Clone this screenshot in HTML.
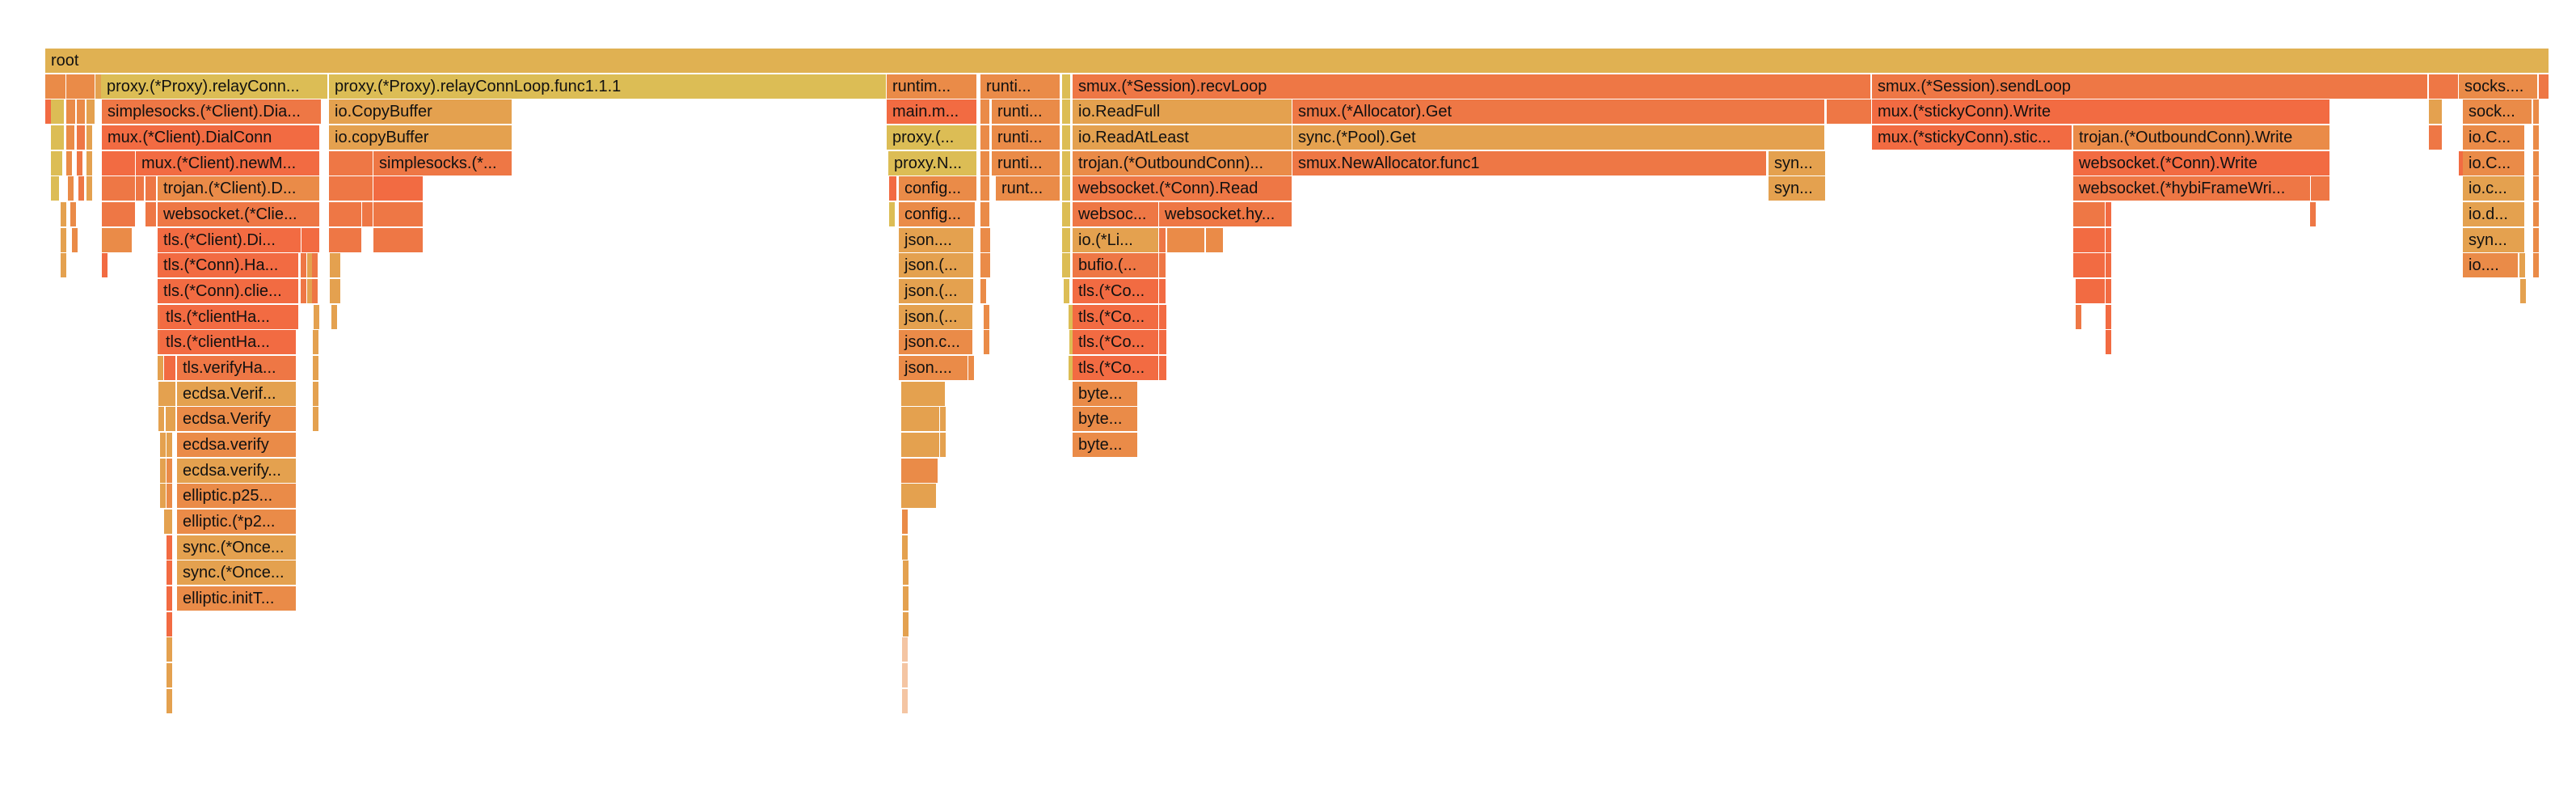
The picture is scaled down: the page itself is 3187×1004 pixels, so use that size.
<!DOCTYPE html>
<html><head><meta charset="utf-8"><style>
html,body{margin:0;padding:0;background:#fff;width:3187px;height:1004px;overflow:hidden;position:relative}
.r{position:absolute;left:0;height:30px;width:3187px}
.r div{position:absolute;top:0;height:30px;overflow:hidden;white-space:nowrap;font:20px/31px "Liberation Sans",sans-serif;color:#111;padding-left:7px;box-sizing:border-box}
.G{background:#e0b152}.Y{background:#dcbd55}.O{background:#e8994a}.A{background:#e4a14f}.R{background:#f26b42}.M{background:#ee7745}.P{background:#ea8b48}
</style></head><body>
<div class="r" style="top:60px"><div class="G" style="left:56px;width:3097px">root</div></div>
<div class="r" style="top:92px">
<div class="P" style="left:56px;width:25px"></div><div class="P" style="left:82px;width:35px"></div><div class="A" style="left:118px;width:4px"></div>
<div class="Y" style="left:125px;width:280px">proxy.(*Proxy).relayConn...</div>
<div class="Y" style="left:407px;width:689px">proxy.(*Proxy).relayConnLoop.func1.1.1</div>
<div class="P" style="left:1097px;width:111px">runtim...</div>
<div class="P" style="left:1213px;width:98px">runti...</div>
<div class="Y" style="left:1314px;width:10px"></div>
<div class="M" style="left:1327px;width:987px">smux.(*Session).recvLoop</div>
<div class="M" style="left:2316px;width:687px">smux.(*Session).sendLoop</div>
<div class="M" style="left:3005px;width:36px"></div>
<div class="P" style="left:3042px;width:97px">socks....</div>
<div class="M" style="left:3141px;width:12px"></div>
</div>
<div class="r" style="top:123px">
<div class="R" style="left:56px;width:5px"></div><div class="Y" style="left:63px;width:16px"></div><div class="P" style="left:82px;width:11px"></div><div class="P" style="left:95px;width:10px"></div><div class="A" style="left:107px;width:10px"></div>
<div class="M" style="left:126px;width:271px">simplesocks.(*Client).Dia...</div>
<div class="A" style="left:407px;width:226px">io.CopyBuffer</div>
<div class="R" style="left:1097px;width:111px">main.m...</div>
<div class="P" style="left:1213px;width:11px"></div>
<div class="P" style="left:1227px;width:84px">runti...</div>
<div class="Y" style="left:1314px;width:10px"></div>
<div class="A" style="left:1327px;width:271px">io.ReadFull</div>
<div class="M" style="left:1599px;width:658px">smux.(*Allocator).Get</div>
<div class="M" style="left:2260px;width:55px"></div>
<div class="R" style="left:2316px;width:566px">mux.(*stickyConn).Write</div>
<div class="A" style="left:3005px;width:16px"></div>
<div class="P" style="left:3047px;width:85px">sock...</div>
<div class="P" style="left:3134px;width:3px"></div>
</div>
<div class="r" style="top:155px">
<div class="Y" style="left:63px;width:16px"></div><div class="P" style="left:82px;width:10px"></div><div class="M" style="left:95px;width:10px"></div><div class="A" style="left:107px;width:6px"></div>
<div class="R" style="left:126px;width:269px">mux.(*Client).DialConn</div>
<div class="A" style="left:407px;width:226px">io.copyBuffer</div>
<div class="Y" style="left:1097px;width:111px">proxy.(...</div>
<div class="P" style="left:1213px;width:11px"></div>
<div class="P" style="left:1227px;width:84px">runti...</div>
<div class="Y" style="left:1314px;width:10px"></div>
<div class="A" style="left:1327px;width:271px">io.ReadAtLeast</div>
<div class="A" style="left:1599px;width:658px">sync.(*Pool).Get</div>
<div class="R" style="left:2316px;width:247px">mux.(*stickyConn).stic...</div>
<div class="P" style="left:2565px;width:317px">trojan.(*OutboundConn).Write</div>
<div class="M" style="left:3005px;width:16px"></div>
<div class="P" style="left:3047px;width:76px">io.C...</div>
<div class="P" style="left:3134px;width:3px"></div>
</div>
<div class="r" style="top:187px">
<div class="Y" style="left:63px;width:14px"></div><div class="P" style="left:82px;width:6px"></div><div class="M" style="left:95px;width:5px"></div><div class="A" style="left:107px;width:6px"></div>
<div class="R" style="left:126px;width:41px"></div>
<div class="R" style="left:168px;width:227px">mux.(*Client).newM...</div>
<div class="M" style="left:407px;width:54px"></div>
<div class="M" style="left:462px;width:171px">simplesocks.(*...</div>
<div class="Y" style="left:1099px;width:109px">proxy.N...</div>
<div class="P" style="left:1213px;width:11px"></div>
<div class="P" style="left:1227px;width:84px">runti...</div>
<div class="Y" style="left:1314px;width:10px"></div>
<div class="P" style="left:1327px;width:271px">trojan.(*OutboundConn)...</div>
<div class="M" style="left:1599px;width:586px">smux.NewAllocator.func1</div>
<div class="A" style="left:2188px;width:70px">syn...</div>
<div class="R" style="left:2565px;width:317px">websocket.(*Conn).Write</div>
<div class="R" style="left:3042px;width:3px"></div>
<div class="P" style="left:3047px;width:76px">io.C...</div>
<div class="P" style="left:3134px;width:3px"></div>
</div>
<div class="r" style="top:218px">
<div class="Y" style="left:63px;width:10px"></div><div class="P" style="left:84px;width:3px"></div><div class="M" style="left:97px;width:3px"></div><div class="A" style="left:107px;width:3px"></div>
<div class="M" style="left:126px;width:41px"></div><div class="M" style="left:168px;width:10px"></div><div class="M" style="left:180px;width:13px"></div>
<div class="P" style="left:195px;width:200px">trojan.(*Client).D...</div>
<div class="M" style="left:407px;width:54px"></div>
<div class="R" style="left:462px;width:61px"></div>
<div class="R" style="left:1100px;width:9px"></div>
<div class="P" style="left:1112px;width:96px">config...</div>
<div class="P" style="left:1213px;width:11px"></div>
<div class="P" style="left:1232px;width:79px">runt...</div>
<div class="Y" style="left:1314px;width:10px"></div>
<div class="M" style="left:1327px;width:271px">websocket.(*Conn).Read</div>
<div class="A" style="left:2188px;width:70px">syn...</div>
<div class="M" style="left:2565px;width:293px">websocket.(*hybiFrameWri...</div>
<div class="M" style="left:2859px;width:23px"></div>
<div class="A" style="left:3047px;width:76px">io.c...</div>
<div class="P" style="left:3134px;width:3px"></div>
</div>
<div class="r" style="top:250px">
<div class="A" style="left:75px;width:2px"></div><div class="P" style="left:87px;width:2px"></div>
<div class="M" style="left:126px;width:41px"></div><div class="M" style="left:180px;width:13px"></div>
<div class="M" style="left:195px;width:200px">websocket.(*Clie...</div>
<div class="M" style="left:407px;width:40px"></div><div class="M" style="left:448px;width:13px"></div><div class="M" style="left:462px;width:61px"></div>
<div class="Y" style="left:1100px;width:4px"></div>
<div class="P" style="left:1112px;width:94px">config...</div>
<div class="P" style="left:1213px;width:11px"></div>
<div class="Y" style="left:1314px;width:10px"></div>
<div class="M" style="left:1327px;width:106px">websoc...</div>
<div class="M" style="left:1434px;width:164px">websocket.hy...</div>
<div class="M" style="left:2565px;width:39px"></div><div class="R" style="left:2605px;width:7px"></div>
<div class="M" style="left:2858px;width:2px"></div>
<div class="A" style="left:3047px;width:76px">io.d...</div>
<div class="P" style="left:3134px;width:3px"></div>
</div>
<div class="r" style="top:282px">
<div class="A" style="left:75px;width:2px"></div><div class="P" style="left:89px;width:2px"></div>
<div class="P" style="left:126px;width:37px"></div>
<div class="R" style="left:195px;width:177px">tls.(*Client).Di...</div>
<div class="R" style="left:373px;width:22px"></div>
<div class="M" style="left:407px;width:40px"></div><div class="M" style="left:462px;width:61px"></div>
<div class="A" style="left:1112px;width:92px">json....</div>
<div class="P" style="left:1213px;width:12px"></div>
<div class="Y" style="left:1314px;width:10px"></div>
<div class="A" style="left:1327px;width:106px">io.(*Li...</div>
<div class="M" style="left:1434px;width:8px"></div><div class="P" style="left:1444px;width:46px"></div><div class="P" style="left:1492px;width:21px"></div>
<div class="R" style="left:2565px;width:39px"></div><div class="R" style="left:2605px;width:7px"></div>
<div class="A" style="left:3047px;width:76px">syn...</div>
<div class="P" style="left:3134px;width:3px"></div>
</div>
<div class="r" style="top:313px">
<div class="A" style="left:75px;width:2px"></div>
<div class="R" style="left:126px;width:4px"></div>
<div class="R" style="left:195px;width:174px">tls.(*Conn).Ha...</div>
<div class="M" style="left:372px;width:4px"></div><div class="A" style="left:380px;width:3px"></div><div class="M" style="left:386px;width:7px"></div>
<div class="A" style="left:408px;width:13px"></div>
<div class="A" style="left:1112px;width:92px">json.(...</div>
<div class="P" style="left:1213px;width:12px"></div>
<div class="Y" style="left:1314px;width:10px"></div>
<div class="M" style="left:1327px;width:106px">bufio.(...</div>
<div class="M" style="left:1434px;width:8px"></div>
<div class="R" style="left:2565px;width:39px"></div><div class="R" style="left:2605px;width:7px"></div>
<div class="P" style="left:3047px;width:68px">io....</div>
<div class="A" style="left:3117px;width:6px"></div>
<div class="P" style="left:3134px;width:3px"></div>
</div>
<div class="r" style="top:345px">
<div class="R" style="left:195px;width:174px">tls.(*Conn).clie...</div>
<div class="M" style="left:372px;width:4px"></div><div class="A" style="left:380px;width:3px"></div><div class="M" style="left:386px;width:7px"></div>
<div class="A" style="left:408px;width:13px"></div>
<div class="A" style="left:1112px;width:92px">json.(...</div>
<div class="P" style="left:1213px;width:3px"></div>
<div class="Y" style="left:1316px;width:3px"></div>
<div class="R" style="left:1327px;width:106px">tls.(*Co...</div>
<div class="R" style="left:1434px;width:8px"></div>
<div class="R" style="left:2568px;width:36px"></div><div class="R" style="left:2605px;width:7px"></div>
<div class="A" style="left:3118px;width:3px"></div>
</div>
<div class="r" style="top:377px">
<div class="M" style="left:195px;width:2px"></div>
<div class="R" style="left:198px;width:171px">tls.(*clientHa...</div>
<div class="A" style="left:388px;width:5px"></div><div class="A" style="left:410px;width:2px"></div>
<div class="A" style="left:1112px;width:91px">json.(...</div>
<div class="P" style="left:1217px;width:2px"></div>
<div class="Y" style="left:1322px;width:2px"></div>
<div class="R" style="left:1327px;width:106px">tls.(*Co...</div>
<div class="R" style="left:1434px;width:9px"></div>
<div class="M" style="left:2568px;width:2px"></div><div class="R" style="left:2605px;width:7px"></div>
</div>
<div class="r" style="top:408px">
<div class="M" style="left:195px;width:2px"></div>
<div class="R" style="left:198px;width:168px">tls.(*clientHa...</div>
<div class="A" style="left:387px;width:6px"></div>
<div class="P" style="left:1112px;width:91px">json.c...</div>
<div class="P" style="left:1217px;width:2px"></div>
<div class="Y" style="left:1323px;width:2px"></div>
<div class="R" style="left:1327px;width:106px">tls.(*Co...</div>
<div class="R" style="left:1434px;width:9px"></div>
<div class="R" style="left:2605px;width:5px"></div>
</div>
<div class="r" style="top:440px">
<div class="A" style="left:195px;width:6px"></div><div class="R" style="left:203px;width:14px"></div>
<div class="M" style="left:219px;width:147px">tls.verifyHa...</div>
<div class="A" style="left:387px;width:6px"></div>
<div class="P" style="left:1112px;width:85px">json....</div>
<div class="P" style="left:1198px;width:5px"></div>
<div class="Y" style="left:1322px;width:3px"></div>
<div class="R" style="left:1327px;width:106px">tls.(*Co...</div>
<div class="R" style="left:1434px;width:9px"></div>
</div>
<div class="r" style="top:472px">
<div class="A" style="left:196px;width:4px"></div><div class="A" style="left:203px;width:14px"></div>
<div class="A" style="left:219px;width:147px">ecdsa.Verif...</div>
<div class="A" style="left:387px;width:6px"></div>
<div class="A" style="left:1115px;width:54px"></div>
<div class="P" style="left:1327px;width:80px">byte...</div>
</div>
<div class="r" style="top:503px">
<div class="A" style="left:196px;width:4px"></div><div class="A" style="left:205px;width:12px"></div>
<div class="P" style="left:219px;width:147px">ecdsa.Verify</div>
<div class="A" style="left:387px;width:2px"></div>
<div class="A" style="left:1115px;width:47px"></div><div class="A" style="left:1163px;width:5px"></div>
<div class="P" style="left:1327px;width:80px">byte...</div>
</div>
<div class="r" style="top:535px">
<div class="A" style="left:198px;width:2px"></div><div class="A" style="left:206px;width:7px"></div>
<div class="P" style="left:219px;width:147px">ecdsa.verify</div>
<div class="A" style="left:1115px;width:47px"></div><div class="A" style="left:1163px;width:2px"></div>
<div class="P" style="left:1327px;width:80px">byte...</div>
</div>
<div class="r" style="top:567px">
<div class="A" style="left:198px;width:2px"></div><div class="P" style="left:206px;width:7px"></div>
<div class="A" style="left:219px;width:147px">ecdsa.verify...</div>
<div class="P" style="left:1115px;width:45px"></div>
</div>
<div class="r" style="top:598px">
<div class="A" style="left:198px;width:2px"></div><div class="P" style="left:206px;width:7px"></div>
<div class="P" style="left:219px;width:147px">elliptic.p25...</div>
<div class="A" style="left:1115px;width:43px"></div>
</div>
<div class="r" style="top:630px">
<div class="A" style="left:203px;width:10px"></div>
<div class="P" style="left:219px;width:147px">elliptic.(*p2...</div>
<div class="P" style="left:1116px;width:5px"></div>
</div>
<div class="r" style="top:662px">
<div class="R" style="left:206px;width:6px"></div>
<div class="A" style="left:219px;width:147px">sync.(*Once...</div>
<div class="A" style="left:1116px;width:5px"></div>
</div>
<div class="r" style="top:693px">
<div class="R" style="left:206px;width:6px"></div>
<div class="A" style="left:219px;width:147px">sync.(*Once...</div>
<div class="A" style="left:1117px;width:3px"></div>
</div>
<div class="r" style="top:725px">
<div class="R" style="left:206px;width:2px"></div>
<div class="P" style="left:219px;width:147px">elliptic.initT...</div>
<div class="A" style="left:1117px;width:3px"></div>
</div>
<div class="r" style="top:757px"><div class="R" style="left:206px;width:2px"></div><div class="A" style="left:1117px;width:2px"></div></div>
<div class="r" style="top:788px"><div class="A" style="left:206px;width:2px"></div><div class="P" style="left:1116px;width:1px;opacity:.5"></div></div>
<div class="r" style="top:820px"><div class="A" style="left:206px;width:2px"></div><div class="P" style="left:1116px;width:1px;opacity:.5"></div></div>
<div class="r" style="top:852px"><div class="A" style="left:206px;width:2px"></div><div class="P" style="left:1116px;width:1px;opacity:.5"></div></div>
</body></html>
